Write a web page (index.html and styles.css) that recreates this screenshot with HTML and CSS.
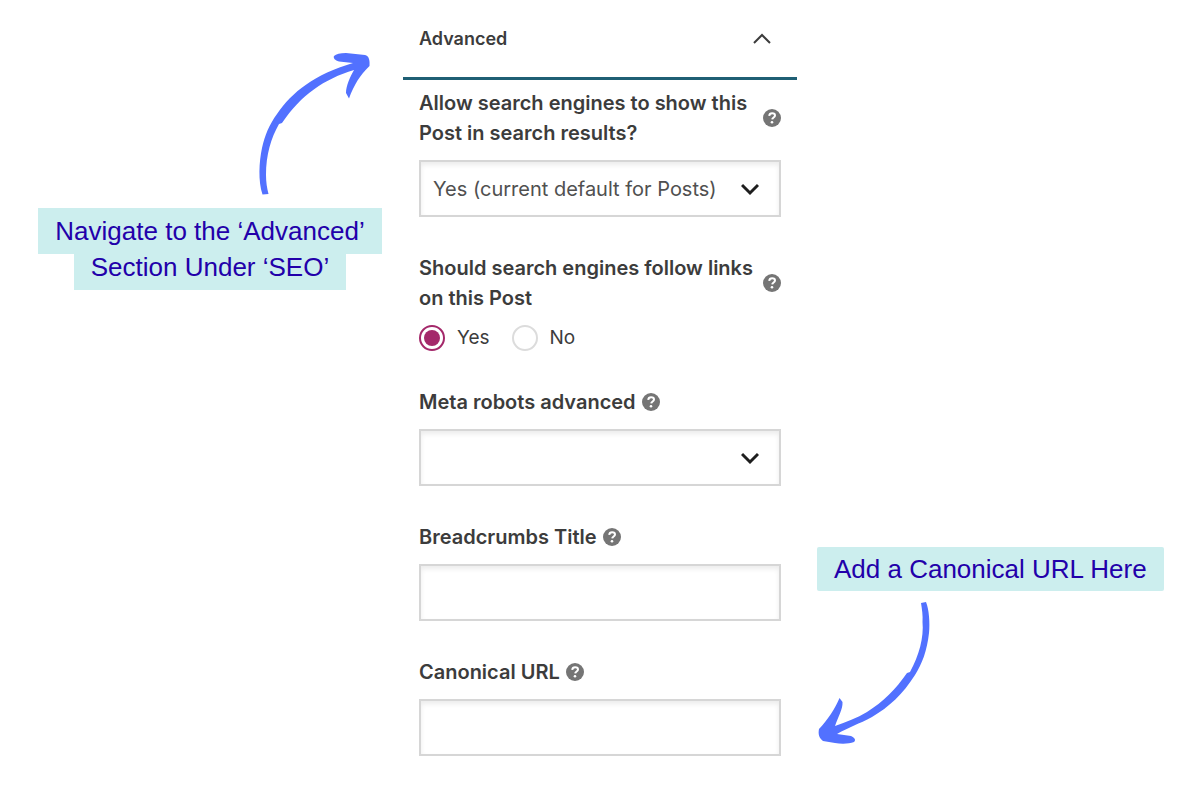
FILE: index.html
```
<!DOCTYPE html>
<html lang="en">
<head>
  <meta charset="UTF-8">
  <meta name="viewport" content="width=device-width, initial-scale=1.0">
  <title>Canonical URL Settings</title>
  <link rel="stylesheet" href="styles.css">
</head>
<body>
  <!-- Shared icons -->
  <svg class="sprite" aria-hidden="true">
    <symbol id="help" viewBox="0 0 18 18">
      <circle cx="9" cy="9" r="9" fill="#757575"/>
      <path d="M6.2 6.8c.2-1.700 1.300-2.500 2.900-2.500 1.700 0 2.900.9 2.900 2.300 0 1.900-2.600 1.900-2.800 3.800" fill="none" stroke="#fff" stroke-width="2"/>
      <circle cx="9" cy="13.200" r="1.300" fill="#fff"/>
    </symbol>
  </svg>

  <div class="layout">
    <!-- Left Note -->
    <aside class="callout callout-left">
      <svg class="arrow" viewBox="0 0 150 160" aria-hidden="true">
        <path d="M22.500 153.500C18 140 19 121 22 107C25 94 29 84 37 73C52 51 75 33 113 22L99 20.500C95 19.500 93 17 94 15C96 13 100 12 106 12L125 14C129 15 130 19 129.500 25C120 34 114 44 109 57.500L106 52C106 45 110 36 114 29C84 38 61 54 42 82L39 83C31 97 26 114 26 134C26 141 27 147 28.500 153Z"/>
      </svg>
      <p class="note"><span class="mark"><span class="mark-text">Navigate to the ‘Advanced’</span></span><br><span class="mark"><span class="mark-text">Section Under ‘SEO’</span></span></p>
    </aside>

    <!-- Settings Panel -->
    <main class="panel">
      <button class="panel-header" type="button" aria-expanded="true">
        Advanced
        <svg class="chevron" viewBox="0 0 18 18" aria-hidden="true"><path d="M1 13l8-8 8 8"/></svg>
      </button>

      <form class="fields">
        <div class="field">
          <div class="field-label wide">
            <label for="index">Allow search engines to show this Post in search results?</label>
            <svg class="help"><use href="#help"/></svg>
          </div>
          <div class="select-box">
            <select id="index">
              <option>Yes (current default for Posts)</option>
              <option>No</option>
            </select>
            <svg class="select-arrow" viewBox="0 0 18 18" aria-hidden="true"><path d="M1 5l8 8 8-8"/></svg>
          </div>
        </div>

        <div class="field" role="radiogroup" aria-labelledby="follow-label">
          <div class="field-label wide">
            <span id="follow-label">Should search engines follow links on this Post</span>
            <svg class="help"><use href="#help"/></svg>
          </div>
          <div class="radios">
            <label class="radio"><input type="radio" name="follow" checked>Yes</label>
            <label class="radio"><input type="radio" name="follow">No</label>
          </div>
        </div>

        <div class="field">
          <div class="field-label">
            <label for="robots">Meta robots advanced</label>
            <svg class="help"><use href="#help"/></svg>
          </div>
          <div class="select-box">
            <select id="robots">
              <option></option>
            </select>
            <svg class="select-arrow" viewBox="0 0 18 18" aria-hidden="true"><path d="M1 5l8 8 8-8"/></svg>
          </div>
        </div>

        <div class="field">
          <div class="field-label">
            <label for="breadcrumbs">Breadcrumbs Title</label>
            <svg class="help"><use href="#help"/></svg>
          </div>
          <input class="text-input" type="text" id="breadcrumbs">
        </div>

        <div class="field">
          <div class="field-label">
            <label for="canonical">Canonical URL</label>
            <svg class="help"><use href="#help"/></svg>
          </div>
          <input class="text-input" type="text" id="canonical">
        </div>
      </form>
    </main>

    <!-- Right Note -->
    <aside class="callout callout-right">
      <p class="note"><span class="mark">Add a Canonical URL Here</span></p>
      <svg class="arrow" viewBox="0 0 150 165" aria-hidden="true">
        <path d="M116 12L121 11C124 18 125 32 124 42C122 60 117 73 110 84C98 103 84 116 67 126C54 133 44 136 32 143L46 145C50 147 51 149 49 151C44 153 36 153 30 152L18 150C14 147 13 143 14 138C22 130 31 116 34.500 107L37.500 111C38 118 33 126 30 135C41 131 52 127 62 121C78 111 91 98 102 82L105 81C114 65 119 46 117.500 31C118 25 117 18 116 12Z"/>
      </svg>
    </aside>
  </div>
</body>
</html>
```

FILE: styles.css
```
:root {
  --text-color: #3c3c3c;
  --border-color: #d6d6d6;
  --accent: #1f5f74;
  --radio: #a4286a;
  --note-bg: #cceeee;
  --note-text: #2200aa;
  --arrow: #5271ff;
}

* {
  box-sizing: border-box;
}

body {
  margin: 0;
  font-family: Inter, sans-serif;
  font-size: 20px;
  line-height: 30px;
  background-color: #ffffff;
  color: var(--text-color);
}

.sprite {
  position: absolute;
  width: 0;
  height: 0;
}

.layout {
  display: grid;
  grid-template-columns: 1fr minmax(auto, 394px) 1fr;
}

/* Notes */
.callout {
  display: flex;
  flex-direction: column;
}

.callout-left {
  align-items: center;
  padding: 41px 0 0 17px;
}

.callout-left .arrow {
  width: 150px;
  height: 160px;
  margin-left: 210px;
}

.callout-right {
  align-items: flex-start;
  justify-content: flex-end;
  padding: 0 0 44px 20px;
}

.callout-right .arrow {
  width: 150px;
  height: 165px;
  margin-left: -12px;
}

.arrow {
  fill: var(--arrow);
}

.note {
  margin: 0;
  padding: 12px 0;
  font-family: "Liberation Sans", Arial, sans-serif;
  font-size: 26px;
  line-height: 36px;
  color: var(--note-text);
  text-align: center;
  white-space: nowrap;
}

.mark {
  padding: 8px 17px;
  background-color: var(--note-bg);
}

.callout-right .note {
  padding: 0;
}

.callout-right .mark {
  display: block;
  padding: 4px 17px;
  border-radius: 2px;
}

/* keeps descenders above the next line's background */
.mark-text {
  position: relative;
  z-index: 1;
}

/* Panel */
.panel-header {
  display: flex;
  align-items: center;
  justify-content: space-between;
  width: 100%;
  padding: 24px 26px 23px 16px;
  border: 0;
  border-bottom: 3px solid var(--accent);
  background: none;
  font-family: inherit;
  font-size: 18px;
  font-weight: 600;
  line-height: 30px;
  color: var(--text-color);
  cursor: pointer;
}

.chevron {
  width: 18px;
  height: 18px;
  fill: none;
  stroke: var(--text-color);
  stroke-width: 2;
}

.fields {
  display: flex;
  flex-direction: column;
  gap: 36px;
  padding: 8px 16px 44px;
}

.field {
  display: flex;
  flex-direction: column;
  gap: 12px;
}

.field-label {
  display: flex;
  align-items: center;
  gap: 6px;
  font-weight: 600;
}

.field-label.wide {
  justify-content: space-between;
}

.help {
  flex: none;
  width: 18px;
  height: 18px;
}

.select-box {
  display: grid;
  align-items: center;
}

.select-box select,
.select-arrow {
  grid-area: 1 / 1;
}

.select-arrow {
  justify-self: end;
  width: 18px;
  height: 18px;
  margin-right: 22px;
  fill: none;
  stroke: #1e1e1e;
  stroke-width: 3;
  pointer-events: none;
}

select,
.text-input {
  width: 100%;
  height: 57px;
  padding: 0 12px;
  border: 2px solid var(--border-color);
  border-radius: 0;
  background-color: #ffffff;
  box-shadow: inset 0 3px 5px rgba(0, 0, 0, 0.08);
  font-family: inherit;
  font-size: 20px;
  color: #505050;
  appearance: none;
}

.radios {
  display: flex;
  gap: 22px;
}

.radio {
  display: flex;
  align-items: center;
  gap: 12px;
  height: 26px;
  font-size: 19px;
}

.radio input {
  display: grid;
  place-items: center;
  width: 26px;
  height: 26px;
  margin: 0;
  border: 2px solid #dcdcdc;
  border-radius: 50%;
  appearance: none;
}

.radio input:checked {
  border-color: var(--radio);
}

.radio input:checked::before {
  content: "";
  width: 16px;
  height: 16px;
  border-radius: 50%;
  background-color: var(--radio);
}

@media (max-width: 1100px) {
  .layout {
    grid-template-columns: 1fr;
  }
}
```
